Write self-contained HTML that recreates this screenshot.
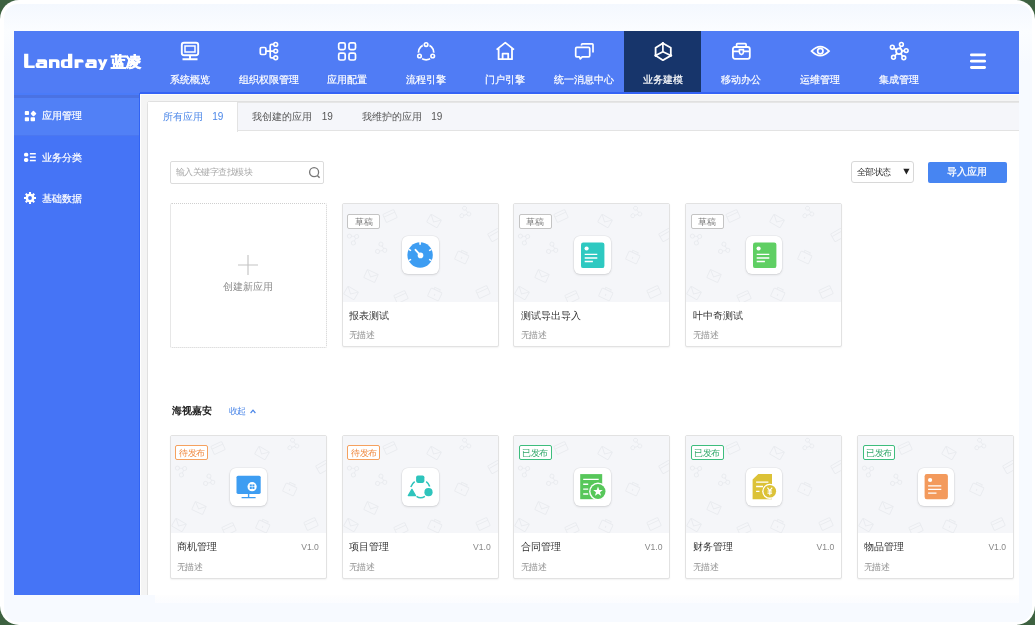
<!DOCTYPE html>
<html><head><meta charset="utf-8">
<style>
*{margin:0;padding:0;box-sizing:border-box;}
html,body{width:1035px;height:625px;overflow:hidden;background:#3d6140;font-family:"Liberation Sans",sans-serif;}
.abs{position:absolute;}
#clip{position:absolute;left:0;top:0;width:1035px;height:625px;clip-path:inset(31px 16px 30px 14px);will-change:transform;}
#frame{position:absolute;left:0;top:0;width:1035px;height:625px;border-radius:19px;background:#fff;overflow:hidden;}
#inner{position:absolute;left:3.5px;top:3.5px;right:3.5px;bottom:3.5px;border-radius:14px;background:linear-gradient(#f4f8fe,#fbfdff 27px,#f7faff 60px);}
.nl{width:80px;text-align:center;color:#fff;font-weight:500;-webkit-text-stroke:0.2px #fff;font-size:10px;line-height:14px;white-space:nowrap;}
.sl{color:#fff;font-weight:500;-webkit-text-stroke:0.2px #fff;font-size:10px;line-height:14px;white-space:nowrap;}
.tab{font-size:10px;font-weight:500;line-height:14px;white-space:nowrap;}
.tabn{font-size:10px;line-height:12px;white-space:nowrap;}

.card{width:157.2px;height:144px;border:1px solid #e2e2e2;border-radius:2px;background:#fff;box-shadow:0 1px 1.5px rgba(0,0,0,0.05);}
.card .img{position:absolute;left:0;top:0;width:155.2px;height:97.5px;background:#f5f6f9;overflow:hidden;}
.card .ib{position:absolute;left:59.8px;top:32px;width:36.5px;height:38px;background:#fff;border-radius:6px;box-shadow:0 0 0 0.6px rgba(0,0,0,0.06),0 1px 2.5px rgba(0,0,0,0.12);}
.card .ib svg{position:absolute;left:0;top:0;}
.card .tt{position:absolute;left:6.5px;top:104.8px;font-size:10px;font-weight:500;color:#333;line-height:14px;white-space:nowrap;}
.card .ds{position:absolute;left:6.5px;top:126.3px;font-size:9px;color:#929292;line-height:12px;white-space:nowrap;transform:scale(0.944);transform-origin:0 0;}
.card .vr{position:absolute;right:7px;top:105.5px;font-size:8.6px;color:#888;line-height:12px;}
.tag{position:absolute;left:4.8px;top:9.8px;height:15px;width:32.8px;border:1.1px solid #aaa;border-radius:2px;background:#fff;text-align:center;}
.tag span{position:absolute;left:50%;top:1px;font-size:10px;line-height:12px;white-space:nowrap;transform:translateX(-50%) scale(0.87);transform-origin:50% 50%;}

.sm{font-size:9px;line-height:12px;white-space:nowrap;transform:scale(0.944);transform-origin:0 0;}
</style></head>
<body>
<div id="frame"><div id="inner"></div>
<div class="abs" style="left:155px;top:595px;width:864px;height:8px;background:linear-gradient(#fefefe,#fbfcff)"></div>
<div id="clip"><div class="abs" style="left:14px;top:31px;width:1005px;height:62px;background:#507cf5"></div>
<div class="abs" style="left:624px;top:31px;width:77.2px;height:62px;background:#17356b"></div>
<svg class="abs" viewBox="0 0 24 24" width="24" height="24" style="left:177.7px;top:39px"><rect x="3.8" y="3.8" width="16.4" height="12.4" rx="2.2" fill="none" stroke="#fff" stroke-width="1.9"/><rect x="7" y="7" width="10" height="6" fill="none" stroke="#fff" stroke-width="1.5"/><path d="M12 16.5V20.2M4.5 20.2H19.5" stroke="#fff" stroke-width="1.9" fill="none"/></svg>
<div class="abs nl" style="left:149.7px;top:72.5px">系统概览</div>
<svg class="abs" viewBox="0 0 24 24" width="24" height="24" style="left:256.5px;top:39px"><rect x="3.3" y="8.5" width="5.6" height="7" rx="1.3" fill="none" stroke="#fff" stroke-width="1.7"/><path d="M8.9 12.1H13.2M16.6 5.4H14.6Q13.2 5.4 13.2 6.8V17.4Q13.2 18.8 14.6 18.8H16.6M13.2 12.1H16.6" fill="none" stroke="#fff" stroke-width="1.7"/><circle cx="18.7" cy="5.4" r="1.9" fill="none" stroke="#fff" stroke-width="1.6"/><circle cx="18.7" cy="12.1" r="1.9" fill="none" stroke="#fff" stroke-width="1.6"/><circle cx="18.7" cy="18.8" r="1.9" fill="none" stroke="#fff" stroke-width="1.6"/></svg>
<div class="abs nl" style="left:228.5px;top:72.5px">组织权限管理</div>
<svg class="abs" viewBox="0 0 24 24" width="24" height="24" style="left:335.3px;top:39px"><rect x="3.7" y="3.9" width="6.5" height="6.8" rx="1.6" fill="none" stroke="#fff" stroke-width="1.7"/><rect x="14" y="3.9" width="6.5" height="6.8" rx="1.6" fill="none" stroke="#fff" stroke-width="1.7"/><rect x="3.7" y="14.2" width="6.5" height="6.8" rx="1.6" fill="none" stroke="#fff" stroke-width="1.7"/><rect x="14" y="14.2" width="6.5" height="6.8" rx="1.6" fill="none" stroke="#fff" stroke-width="1.7"/></svg>
<div class="abs nl" style="left:307.3px;top:72.5px">应用配置</div>
<svg class="abs" viewBox="0 0 24 24" width="24" height="24" style="left:414.1px;top:39px"><circle cx="12.1" cy="13.2" r="7.6" fill="none" stroke="#fff" stroke-width="1.7"/><g fill="#507cf5" stroke="#507cf5" stroke-width="3.4"><circle cx="12.1" cy="5.6" r="1.8"/><circle cx="5.5" cy="17" r="1.8"/><circle cx="18.7" cy="17" r="1.8"/></g><g fill="none" stroke="#fff" stroke-width="1.6"><circle cx="12.1" cy="5.6" r="1.8"/><circle cx="5.5" cy="17" r="1.8"/><circle cx="18.7" cy="17" r="1.8"/></g></svg>
<div class="abs nl" style="left:386.1px;top:72.5px">流程引擎</div>
<svg class="abs" viewBox="0 0 24 24" width="24" height="24" style="left:492.9px;top:39px"><path d="M3.6 10.6L12.3 3.6L21 10.6M5.6 9.4V20.2H19V9.4M9.6 20.2V14.6H15.2V20.2" fill="none" stroke="#fff" stroke-width="1.8" stroke-linejoin="round"/></svg>
<div class="abs nl" style="left:464.9px;top:72.5px">门户引擎</div>
<svg class="abs" viewBox="0 0 24 24" width="24" height="24" style="left:571.7px;top:39px"><path d="M9.5 6.6V5.8Q9.5 4.9 10.4 4.9H20.2Q21 4.9 21 5.8V13.4" fill="none" stroke="#fff" stroke-width="1.7"/><path d="M4.8 8.3H16.6Q17.7 8.3 17.7 9.4V16.7Q17.7 17.8 16.6 17.8H10.2L8.3 19.8L7.4 17.8H4.8Q3.7 17.8 3.7 16.7V9.4Q3.7 8.3 4.8 8.3Z" fill="none" stroke="#fff" stroke-width="1.7" stroke-linejoin="round"/></svg>
<div class="abs nl" style="left:543.7px;top:72.5px">统一消息中心</div>
<svg class="abs" viewBox="0 0 24 24" width="24" height="24" style="left:650.5px;top:39px"><path d="M11.9 4.2L19.8 8.8V16.6L11.9 21.2L4.6 16.6V8.8Z" fill="none" stroke="#fff" stroke-width="1.8" stroke-linejoin="round"/><path d="M11.9 4.2V12.7L4.6 16.6M11.9 12.7L19.8 16.6" fill="none" stroke="#fff" stroke-width="1.7"/><circle cx="4.8" cy="16.6" r="1.4" fill="#fff"/><circle cx="19.8" cy="16.6" r="1.4" fill="#fff"/><circle cx="11.9" cy="4.2" r="1.2" fill="#fff"/></svg>
<div class="abs nl" style="left:622.5px;top:72.5px">业务建模</div>
<svg class="abs" viewBox="0 0 24 24" width="24" height="24" style="left:729.3px;top:39px"><rect x="3.9" y="8" width="16.9" height="11.8" rx="2" fill="none" stroke="#fff" stroke-width="1.8"/><path d="M7.6 8V5.5Q7.6 4.6 8.5 4.6H16.2Q17.1 4.6 17.1 5.5V8M3.9 12.3H10.3M14.5 12.3H20.8" fill="none" stroke="#fff" stroke-width="1.7"/><path d="M10.4 10.6H14.4V13.2Q14.4 14.9 12.4 15.6Q10.4 14.9 10.4 13.2Z" fill="none" stroke="#fff" stroke-width="1.6"/></svg>
<div class="abs nl" style="left:701.3px;top:72.5px">移动办公</div>
<svg class="abs" viewBox="0 0 24 24" width="24" height="24" style="left:808.1px;top:39px"><path d="M3.6 12.1Q12.3 3.2 21 12.1Q12.3 21 3.6 12.1Z" fill="none" stroke="#fff" stroke-width="1.8"/><circle cx="12.3" cy="12.1" r="2.7" fill="none" stroke="#fff" stroke-width="1.7"/></svg>
<div class="abs nl" style="left:780.1px;top:72.5px">运维管理</div>
<svg class="abs" viewBox="0 0 24 24" width="24" height="24" style="left:886.9px;top:39px"><path d="M12 12.3L14.4 5.4M12 12.3L5.3 8.2M12 12.3L19.2 11.6M12 12.3L6.5 18.3M12 12.3L16.8 18.8" stroke="#fff" stroke-width="1.6"/><circle cx="12" cy="12.3" r="2.9" fill="#507cf5" stroke="#fff" stroke-width="1.8"/><g fill="#507cf5" stroke="#fff" stroke-width="1.6"><circle cx="14.4" cy="5.4" r="1.9"/><circle cx="5.3" cy="8.2" r="1.9"/><circle cx="19.2" cy="11.6" r="1.9"/><circle cx="6.5" cy="18.3" r="1.9"/><circle cx="16.8" cy="18.8" r="1.9"/></g></svg>
<div class="abs nl" style="left:858.9px;top:72.5px">集成管理</div>
<svg class="abs" style="left:969.7px;top:53px" width="16" height="16" viewBox="0 0 16 16"><rect x="0" y="0.4" width="16" height="2.9" rx="1.4" fill="#fff"/><rect x="0" y="6.7" width="16" height="2.9" rx="1.4" fill="#fff"/><rect x="0" y="13.1" width="16" height="2.9" rx="1.4" fill="#fff"/></svg>
<svg class="abs" style="left:0;top:0" width="140" height="80" viewBox="0 0 140 80"><g fill="#fff" fill-rule="evenodd"><path d="M24.1 53.7H28.3V65.4H34.7V68.1H25.6Q24.1 68.1 24.1 66.6Z"/><path d="M37.6 59.3H44.6Q47.1 59.3 47.1 61.8V68.1H38.5Q35.5 68.1 35.5 65.2Q35.5 62.3 38.5 62.3H43.6V62H37.6Q37.2 62 37.2 61.6V59.7Q37.2 59.3 37.6 59.3Z M40.6 64.1H43.6V65.8H40.6Q39.4 65.8 39.4 64.95Q39.4 64.1 40.6 64.1Z"/><path d="M49 59.3H56.5Q59.5 59.3 59.5 62.3V68.1H56V63Q56 62 55 62H52.6V68.1H49Z"/><path d="M68 53.8H72.3V68.1H63.9Q60.9 68.1 60.9 65.1V62.3Q60.9 59.3 63.9 59.3H68Z M65.5 61.6H68V66.1H65.5Q64.5 66.1 64.5 65.1V62.6Q64.5 61.6 65.5 61.6Z"/><path d="M74.6 59.3H81.1Q83.6 59.3 83.6 61.8V62.5H78.5V68.1H74.6Z"/><path transform="translate(49.6,0)" d="M37.6 59.3H44.6Q47.1 59.3 47.1 61.8V68.1H38.5Q35.5 68.1 35.5 65.2Q35.5 62.3 38.5 62.3H43.6V62H37.6Q37.2 62 37.2 61.6V59.7Q37.2 59.3 37.6 59.3Z M40.6 64.1H43.6V65.8H40.6Q39.4 65.8 39.4 64.95Q39.4 64.1 40.6 64.1Z"/><path d="M97.7 59.3H101.3L102.7 63.6L104.1 59.3H107.6L102.8 70.1H99.1L100.9 66.1Z"/></g></svg>
<div class="abs" style="left:110.5px;top:52.5px;font-size:14.5px;line-height:18px;font-weight:bold;color:#fff;-webkit-text-stroke:0.7px #fff;white-space:nowrap">蓝凌</div>
<div class="abs" style="left:14px;top:93px;width:126px;height:502px;background:#4574f6"></div>
<div class="abs" style="left:14px;top:93px;width:126px;height:1.5px;background:#4a7bf9"></div>
<div class="abs" style="left:14px;top:94.5px;width:126px;height:3.5px;background:#4a72e3"></div>
<div class="abs" style="left:14px;top:98px;width:126px;height:37px;background:#5180f6"></div>
<div class="abs" style="left:14px;top:134.5px;width:126px;height:1px;background:#4b77f0"></div>
<div class="abs" style="left:139px;top:93px;width:1px;height:502px;background:#3063f4"></div>
<svg class="abs" width="16" height="16" viewBox="0 0 16 16" style="left:23px;top:109px"><rect x="1.8" y="2.1" width="4.2" height="4" rx="0.8" fill="#fff"/><path d="M10.2 1.5L12.6 3.9Q13.4 4.6 12.6 5.4L10.2 7.6Q9.6 8.1 8.9 7.5L6.8 5.4Q6.1 4.6 6.8 3.9L8.9 1.5Q9.6 0.9 10.2 1.5Z" fill="#fff" transform="translate(10.5,4.6) scale(0.85) translate(-9.7,-4.6)"/><rect x="1.8" y="8.3" width="4.2" height="4" rx="0.8" fill="#fff"/><rect x="7.6" y="8.3" width="4.4" height="4" rx="0.8" fill="#fff"/></svg>
<div class="abs sl" style="left:42px;top:109px">应用管理</div>
<svg class="abs" width="16" height="16" viewBox="0 0 16 16" style="left:23px;top:151px"><rect x="1" y="1.8" width="4.3" height="3.8" rx="1.6" fill="#fff"/><rect x="1" y="6.9" width="4.3" height="4" rx="1.6" fill="#fff"/><rect x="6.9" y="2" width="5.9" height="1.5" fill="#fff"/><rect x="6.9" y="5.4" width="5.9" height="1.5" fill="#fff"/><rect x="6.9" y="8.8" width="5.9" height="1.5" fill="#fff"/></svg>
<div class="abs sl" style="left:42px;top:151px">业务分类</div>
<svg class="abs" width="16" height="16" viewBox="0 0 16 16" style="left:22px;top:190px"><path fill-rule="evenodd" fill="#fff" d="M6.95 1.99L9.05 1.99L9.03 3.72L10.30 4.25L11.51 3.01L12.99 4.49L11.75 5.70L12.28 6.97L14.01 6.95L14.01 9.05L12.28 9.03L11.75 10.30L12.99 11.51L11.51 12.99L10.30 11.75L9.03 12.28L9.05 14.01L6.95 14.01L6.97 12.28L5.70 11.75L4.49 12.99L3.01 11.51L4.25 10.30L3.72 9.03L1.99 9.05L1.99 6.95L3.72 6.97L4.25 5.70L3.01 4.49L4.49 3.01L5.70 4.25L6.97 3.72Z M9.9 8A1.9 1.9 0 1 0 6.1 8A1.9 1.9 0 1 0 9.9 8Z"/></svg>
<div class="abs sl" style="left:42px;top:192px">基础数据</div>
<div class="abs" style="left:140px;top:93px;width:879px;height:502px;background:#f4f4f4"></div>
<div class="abs" style="left:140px;top:93px;width:1px;height:502px;background:#fff"></div>
<div class="abs" style="left:140px;top:93.5px;width:879px;height:1.2px;background:#fdfdf8"></div>
<div class="abs" style="left:140px;top:92px;width:879px;height:1.5px;background:#3563f5"></div>
<div class="abs" style="left:147px;top:101px;width:900px;height:510px;background:#fff;border:1px solid #e0e0e0;border-radius:2.5px"></div>
<div class="abs" style="left:237px;top:101.5px;width:800px;height:29.5px;background:#f5f6fa;border-bottom:1px solid #e3e3e3;border-top:1px solid #e6e6e6"></div>
<div class="abs" style="left:148px;top:102px;width:89.5px;height:29.5px;background:#fff;border-right:1px solid #e3e3e3"></div>
<div class="abs tab" style="left:162.5px;top:109.5px;color:#4a86e8">所有应用</div>
<div class="abs tabn" style="left:212.3px;top:111px;color:#4a86e8">19</div>
<div class="abs tab" style="left:252px;top:109.5px;color:#555">我创建的应用</div>
<div class="abs tabn" style="left:321.8px;top:111px;color:#555">19</div>
<div class="abs tab" style="left:361.5px;top:109.5px;color:#555">我维护的应用</div>
<div class="abs tabn" style="left:431.2px;top:111px;color:#555">19</div>
<div class="abs" style="left:169.5px;top:161px;width:154.5px;height:23px;border:1px solid #dcdcdc;border-radius:2px;background:#fff"></div>
<div class="abs sm" style="left:175.5px;top:167px;color:#aaa">输入关键字查找模块</div>
<svg class="abs" style="left:307.5px;top:165.5px" width="14" height="14" viewBox="0 0 14 14"><circle cx="6.1" cy="6.2" r="4.5" fill="none" stroke="#777" stroke-width="1.3"/><path d="M9.4 9.5L11.6 11.7" stroke="#777" stroke-width="1.5"/></svg>
<div class="abs" style="left:850.5px;top:161px;width:63.5px;height:22px;border:1px solid #d8d8d8;border-radius:3px;background:#fff"></div>
<div class="abs sm" style="left:856.5px;top:166.7px;color:#333">全部状态</div>
<svg class="abs" style="left:902.5px;top:168px" width="7" height="7" viewBox="0 0 7 7"><path d="M0.3 0.8H6.5L3.4 6.4Z" fill="#222"/></svg>
<div class="abs" style="left:927.5px;top:161.5px;width:79px;height:21.5px;background:#4785f2;border-radius:2px;color:#fff;font-weight:500;-webkit-text-stroke:0.25px #fff;font-size:10px;line-height:19.5px;text-align:center">导入应用</div>
<div class="abs" style="left:169.5px;top:203px;width:157.5px;height:144.5px;border:1px dotted #cfcfcf;border-radius:2px;background:#fff"></div>
<svg class="abs" style="left:238px;top:254.6px" width="20" height="20" viewBox="0 0 20 20"><path d="M10 0V20M0 10H20" stroke="#c4c4c4" stroke-width="1.15"/></svg>
<div class="abs" style="left:223px;top:280px;font-size:10px;line-height:14px;color:#8a8a8a;white-space:nowrap">创建新应用</div>
<div class="abs card" style="left:341.5px;top:203px"><div class="img"><svg class="abs" style="left:0;top:0" width="157" height="98" viewBox="0 0 157 98"><g fill="none" stroke="#e9ebef" stroke-width="0.9"><g transform="translate(47,12) rotate(-25)"><rect x="-6" y="-4.5" width="12" height="9" rx="1"/><path d="M-6 -1.5H6"/></g><g transform="translate(91,17) rotate(30)"><rect x="-6" y="-4.5" width="12" height="9" rx="1"/><path d="M-6 -4.5L0 1L6 -4.5"/></g><g transform="translate(123,9) rotate(20)"><circle cx="-3" cy="-4" r="2"/><circle cx="3" cy="0" r="2"/><circle cx="-3" cy="4" r="2"/><path d="M-1.5 -3L1.5 -1M1.5 1L-1.5 3"/></g><g transform="translate(11,34) rotate(-30)"><circle cx="-3" cy="-4" r="2"/><circle cx="3" cy="0" r="2"/><circle cx="-3" cy="4" r="2"/><path d="M-1.5 -3L1.5 -1M1.5 1L-1.5 3"/></g><g transform="translate(39,45) rotate(25)"><circle cx="-3" cy="-4" r="2"/><circle cx="3" cy="0" r="2"/><circle cx="-3" cy="4" r="2"/><path d="M-1.5 -3L1.5 -1M1.5 1L-1.5 3"/></g><g transform="translate(119,53) rotate(25)"><rect x="-6" y="-4" width="12" height="9" rx="1"/><path d="M-3 -4V-6H3V-4M0 0V2"/></g><g transform="translate(152,31) rotate(-30)"><rect x="-6" y="-4.5" width="12" height="9" rx="1"/><path d="M-6 -1.5H6"/></g><g transform="translate(28,72) rotate(25)"><rect x="-6" y="-4.5" width="12" height="9" rx="1"/><path d="M-6 -4.5L0 1L6 -4.5"/></g><g transform="translate(8,89) rotate(30)"><rect x="-6" y="-4.5" width="12" height="9" rx="1"/><path d="M-6 -4.5L0 1L6 -4.5"/></g><g transform="translate(58,93) rotate(-25)"><rect x="-6" y="-4.5" width="12" height="9" rx="1"/><path d="M-6 -1.5H6"/></g><g transform="translate(92,90) rotate(25)"><rect x="-6" y="-4" width="12" height="9" rx="1"/><path d="M-3 -4V-6H3V-4M0 0V2"/></g><g transform="translate(140,88) rotate(-25)"><rect x="-6" y="-4.5" width="12" height="9" rx="1"/><path d="M-6 -1.5H6"/></g></g></svg></div><div class="tag" style="border-color:#c4c4c4;color:#7a7a7a"><span>草稿</span></div><div class="ib"><svg width="36.5" height="38" viewBox="0 0 36.5 38"><g transform="translate(18.1,19)"><circle r="12.7" fill="#3d9df2"/><g stroke="#fff" stroke-width="1.6"><path d="M0 -13V-10.2"/><path d="M-11.4 -5.6L-9 -4.4"/><path d="M11.4 -5.6L9 -4.4"/><path d="M-11.4 5.6L-9 4.4"/><path d="M11.4 5.6L9 4.4"/></g><path d="M0.4 0.3L-4.6 -5.2" stroke="#fff" stroke-width="1.9" stroke-linecap="round"/><circle cx="0.4" cy="0.4" r="2.8" fill="#fff"/></g></svg></div><div class="tt">报表测试</div><div class="ds">无描述</div></div>
<div class="abs card" style="left:513.3px;top:203px"><div class="img"><svg class="abs" style="left:0;top:0" width="157" height="98" viewBox="0 0 157 98"><g fill="none" stroke="#e9ebef" stroke-width="0.9"><g transform="translate(47,12) rotate(-25)"><rect x="-6" y="-4.5" width="12" height="9" rx="1"/><path d="M-6 -1.5H6"/></g><g transform="translate(91,17) rotate(30)"><rect x="-6" y="-4.5" width="12" height="9" rx="1"/><path d="M-6 -4.5L0 1L6 -4.5"/></g><g transform="translate(123,9) rotate(20)"><circle cx="-3" cy="-4" r="2"/><circle cx="3" cy="0" r="2"/><circle cx="-3" cy="4" r="2"/><path d="M-1.5 -3L1.5 -1M1.5 1L-1.5 3"/></g><g transform="translate(11,34) rotate(-30)"><circle cx="-3" cy="-4" r="2"/><circle cx="3" cy="0" r="2"/><circle cx="-3" cy="4" r="2"/><path d="M-1.5 -3L1.5 -1M1.5 1L-1.5 3"/></g><g transform="translate(39,45) rotate(25)"><circle cx="-3" cy="-4" r="2"/><circle cx="3" cy="0" r="2"/><circle cx="-3" cy="4" r="2"/><path d="M-1.5 -3L1.5 -1M1.5 1L-1.5 3"/></g><g transform="translate(119,53) rotate(25)"><rect x="-6" y="-4" width="12" height="9" rx="1"/><path d="M-3 -4V-6H3V-4M0 0V2"/></g><g transform="translate(152,31) rotate(-30)"><rect x="-6" y="-4.5" width="12" height="9" rx="1"/><path d="M-6 -1.5H6"/></g><g transform="translate(28,72) rotate(25)"><rect x="-6" y="-4.5" width="12" height="9" rx="1"/><path d="M-6 -4.5L0 1L6 -4.5"/></g><g transform="translate(8,89) rotate(30)"><rect x="-6" y="-4.5" width="12" height="9" rx="1"/><path d="M-6 -4.5L0 1L6 -4.5"/></g><g transform="translate(58,93) rotate(-25)"><rect x="-6" y="-4.5" width="12" height="9" rx="1"/><path d="M-6 -1.5H6"/></g><g transform="translate(92,90) rotate(25)"><rect x="-6" y="-4" width="12" height="9" rx="1"/><path d="M-3 -4V-6H3V-4M0 0V2"/></g><g transform="translate(140,88) rotate(-25)"><rect x="-6" y="-4.5" width="12" height="9" rx="1"/><path d="M-6 -1.5H6"/></g></g></svg></div><div class="tag" style="border-color:#c4c4c4;color:#7a7a7a"><span>草稿</span></div><div class="ib"><svg width="36.5" height="38" viewBox="0 0 36.5 38"><rect x="7" y="6.6" width="23.4" height="25.5" rx="2.2" fill="#2ec9c1"/><circle cx="12.6" cy="12.5" r="2.1" fill="#fff"/><path d="M10.7 18.3H23.3M10.7 22H23.3M10.7 25.5H18.9" stroke="#fff" stroke-width="1.35"/></svg></div><div class="tt">测试导出导入</div><div class="ds">无描述</div></div>
<div class="abs card" style="left:685.1px;top:203px"><div class="img"><svg class="abs" style="left:0;top:0" width="157" height="98" viewBox="0 0 157 98"><g fill="none" stroke="#e9ebef" stroke-width="0.9"><g transform="translate(47,12) rotate(-25)"><rect x="-6" y="-4.5" width="12" height="9" rx="1"/><path d="M-6 -1.5H6"/></g><g transform="translate(91,17) rotate(30)"><rect x="-6" y="-4.5" width="12" height="9" rx="1"/><path d="M-6 -4.5L0 1L6 -4.5"/></g><g transform="translate(123,9) rotate(20)"><circle cx="-3" cy="-4" r="2"/><circle cx="3" cy="0" r="2"/><circle cx="-3" cy="4" r="2"/><path d="M-1.5 -3L1.5 -1M1.5 1L-1.5 3"/></g><g transform="translate(11,34) rotate(-30)"><circle cx="-3" cy="-4" r="2"/><circle cx="3" cy="0" r="2"/><circle cx="-3" cy="4" r="2"/><path d="M-1.5 -3L1.5 -1M1.5 1L-1.5 3"/></g><g transform="translate(39,45) rotate(25)"><circle cx="-3" cy="-4" r="2"/><circle cx="3" cy="0" r="2"/><circle cx="-3" cy="4" r="2"/><path d="M-1.5 -3L1.5 -1M1.5 1L-1.5 3"/></g><g transform="translate(119,53) rotate(25)"><rect x="-6" y="-4" width="12" height="9" rx="1"/><path d="M-3 -4V-6H3V-4M0 0V2"/></g><g transform="translate(152,31) rotate(-30)"><rect x="-6" y="-4.5" width="12" height="9" rx="1"/><path d="M-6 -1.5H6"/></g><g transform="translate(28,72) rotate(25)"><rect x="-6" y="-4.5" width="12" height="9" rx="1"/><path d="M-6 -4.5L0 1L6 -4.5"/></g><g transform="translate(8,89) rotate(30)"><rect x="-6" y="-4.5" width="12" height="9" rx="1"/><path d="M-6 -4.5L0 1L6 -4.5"/></g><g transform="translate(58,93) rotate(-25)"><rect x="-6" y="-4.5" width="12" height="9" rx="1"/><path d="M-6 -1.5H6"/></g><g transform="translate(92,90) rotate(25)"><rect x="-6" y="-4" width="12" height="9" rx="1"/><path d="M-3 -4V-6H3V-4M0 0V2"/></g><g transform="translate(140,88) rotate(-25)"><rect x="-6" y="-4.5" width="12" height="9" rx="1"/><path d="M-6 -1.5H6"/></g></g></svg></div><div class="tag" style="border-color:#c4c4c4;color:#7a7a7a"><span>草稿</span></div><div class="ib"><svg width="36.5" height="38" viewBox="0 0 36.5 38"><rect x="7" y="6.6" width="23.4" height="25.5" rx="2.2" fill="#5fcf63"/><circle cx="12.6" cy="12.5" r="2.1" fill="#fff"/><path d="M10.7 18.3H23.3M10.7 22H23.3M10.7 25.5H18.9" stroke="#fff" stroke-width="1.35"/></svg></div><div class="tt">叶中奇测试</div><div class="ds">无描述</div></div>
<div class="abs" style="left:172px;top:404px;font-size:10px;line-height:14px;color:#222;font-weight:bold;white-space:nowrap">海视嘉安</div>
<div class="abs sm" style="left:228.5px;top:405.5px;color:#4a86e8">收起</div>
<svg class="abs" style="left:249.5px;top:408.8px" width="6" height="5" viewBox="0 0 6 5"><path d="M0.6 4L3 1.2L5.4 4" fill="none" stroke="#4a86e8" stroke-width="1.2"/></svg>
<div class="abs card" style="left:169.7px;top:434.7px"><div class="img"><svg class="abs" style="left:0;top:0" width="157" height="98" viewBox="0 0 157 98"><g fill="none" stroke="#e9ebef" stroke-width="0.9"><g transform="translate(47,12) rotate(-25)"><rect x="-6" y="-4.5" width="12" height="9" rx="1"/><path d="M-6 -1.5H6"/></g><g transform="translate(91,17) rotate(30)"><rect x="-6" y="-4.5" width="12" height="9" rx="1"/><path d="M-6 -4.5L0 1L6 -4.5"/></g><g transform="translate(123,9) rotate(20)"><circle cx="-3" cy="-4" r="2"/><circle cx="3" cy="0" r="2"/><circle cx="-3" cy="4" r="2"/><path d="M-1.5 -3L1.5 -1M1.5 1L-1.5 3"/></g><g transform="translate(11,34) rotate(-30)"><circle cx="-3" cy="-4" r="2"/><circle cx="3" cy="0" r="2"/><circle cx="-3" cy="4" r="2"/><path d="M-1.5 -3L1.5 -1M1.5 1L-1.5 3"/></g><g transform="translate(39,45) rotate(25)"><circle cx="-3" cy="-4" r="2"/><circle cx="3" cy="0" r="2"/><circle cx="-3" cy="4" r="2"/><path d="M-1.5 -3L1.5 -1M1.5 1L-1.5 3"/></g><g transform="translate(119,53) rotate(25)"><rect x="-6" y="-4" width="12" height="9" rx="1"/><path d="M-3 -4V-6H3V-4M0 0V2"/></g><g transform="translate(152,31) rotate(-30)"><rect x="-6" y="-4.5" width="12" height="9" rx="1"/><path d="M-6 -1.5H6"/></g><g transform="translate(28,72) rotate(25)"><rect x="-6" y="-4.5" width="12" height="9" rx="1"/><path d="M-6 -4.5L0 1L6 -4.5"/></g><g transform="translate(8,89) rotate(30)"><rect x="-6" y="-4.5" width="12" height="9" rx="1"/><path d="M-6 -4.5L0 1L6 -4.5"/></g><g transform="translate(58,93) rotate(-25)"><rect x="-6" y="-4.5" width="12" height="9" rx="1"/><path d="M-6 -1.5H6"/></g><g transform="translate(92,90) rotate(25)"><rect x="-6" y="-4" width="12" height="9" rx="1"/><path d="M-3 -4V-6H3V-4M0 0V2"/></g><g transform="translate(140,88) rotate(-25)"><rect x="-6" y="-4.5" width="12" height="9" rx="1"/><path d="M-6 -1.5H6"/></g></g></svg></div><div class="tag" style="border-color:#f5a15f;color:#f08c45"><span>待发布</span></div><div class="ib"><svg width="36.5" height="38" viewBox="0 0 36.5 38"><rect x="6.5" y="7.7" width="24.2" height="18.2" rx="1.6" fill="#3d9df2"/><path d="M18.6 25.9V29M11.6 29.6H25.6" stroke="#3d9df2" stroke-width="1.4"/><circle cx="22.1" cy="18.7" r="4.6" fill="#fff"/><g fill="#3d9df2"><rect x="19.8" y="16.4" width="2" height="2"/><rect x="22.4" y="16.4" width="2" height="2"/><rect x="19.8" y="19" width="2" height="2"/><rect x="22.4" y="19" width="2" height="2"/></g></svg></div><div class="tt">商机管理</div><div class="ds">无描述</div><div class="vr">V1.0</div></div>
<div class="abs card" style="left:341.5px;top:434.7px"><div class="img"><svg class="abs" style="left:0;top:0" width="157" height="98" viewBox="0 0 157 98"><g fill="none" stroke="#e9ebef" stroke-width="0.9"><g transform="translate(47,12) rotate(-25)"><rect x="-6" y="-4.5" width="12" height="9" rx="1"/><path d="M-6 -1.5H6"/></g><g transform="translate(91,17) rotate(30)"><rect x="-6" y="-4.5" width="12" height="9" rx="1"/><path d="M-6 -4.5L0 1L6 -4.5"/></g><g transform="translate(123,9) rotate(20)"><circle cx="-3" cy="-4" r="2"/><circle cx="3" cy="0" r="2"/><circle cx="-3" cy="4" r="2"/><path d="M-1.5 -3L1.5 -1M1.5 1L-1.5 3"/></g><g transform="translate(11,34) rotate(-30)"><circle cx="-3" cy="-4" r="2"/><circle cx="3" cy="0" r="2"/><circle cx="-3" cy="4" r="2"/><path d="M-1.5 -3L1.5 -1M1.5 1L-1.5 3"/></g><g transform="translate(39,45) rotate(25)"><circle cx="-3" cy="-4" r="2"/><circle cx="3" cy="0" r="2"/><circle cx="-3" cy="4" r="2"/><path d="M-1.5 -3L1.5 -1M1.5 1L-1.5 3"/></g><g transform="translate(119,53) rotate(25)"><rect x="-6" y="-4" width="12" height="9" rx="1"/><path d="M-3 -4V-6H3V-4M0 0V2"/></g><g transform="translate(152,31) rotate(-30)"><rect x="-6" y="-4.5" width="12" height="9" rx="1"/><path d="M-6 -1.5H6"/></g><g transform="translate(28,72) rotate(25)"><rect x="-6" y="-4.5" width="12" height="9" rx="1"/><path d="M-6 -4.5L0 1L6 -4.5"/></g><g transform="translate(8,89) rotate(30)"><rect x="-6" y="-4.5" width="12" height="9" rx="1"/><path d="M-6 -4.5L0 1L6 -4.5"/></g><g transform="translate(58,93) rotate(-25)"><rect x="-6" y="-4.5" width="12" height="9" rx="1"/><path d="M-6 -1.5H6"/></g><g transform="translate(92,90) rotate(25)"><rect x="-6" y="-4" width="12" height="9" rx="1"/><path d="M-3 -4V-6H3V-4M0 0V2"/></g><g transform="translate(140,88) rotate(-25)"><rect x="-6" y="-4.5" width="12" height="9" rx="1"/><path d="M-6 -1.5H6"/></g></g></svg></div><div class="tag" style="border-color:#f5a15f;color:#f08c45"><span>待发布</span></div><div class="ib"><svg width="36.5" height="38" viewBox="0 0 36.5 38"><g fill="#2ec4bc"><rect x="14.1" y="7.5" width="8.3" height="7.4" rx="1.8"/><path d="M9.9 21.4L13.5 27.6H6.3Z" stroke="#2ec4bc" stroke-width="1.3" stroke-linejoin="round"/><circle cx="26.5" cy="24.2" r="4.1"/></g><g fill="none" stroke="#2ec4bc" stroke-width="1.5"><path d="M8.8 18.9Q10 15.6 12.7 13.6"/><path d="M24.2 13.6Q26.8 15.5 27.7 18.5"/><path d="M14.5 28.4Q18.7 31.3 22.9 28.4"/></g></svg></div><div class="tt">项目管理</div><div class="ds">无描述</div><div class="vr">V1.0</div></div>
<div class="abs card" style="left:513.3px;top:434.7px"><div class="img"><svg class="abs" style="left:0;top:0" width="157" height="98" viewBox="0 0 157 98"><g fill="none" stroke="#e9ebef" stroke-width="0.9"><g transform="translate(47,12) rotate(-25)"><rect x="-6" y="-4.5" width="12" height="9" rx="1"/><path d="M-6 -1.5H6"/></g><g transform="translate(91,17) rotate(30)"><rect x="-6" y="-4.5" width="12" height="9" rx="1"/><path d="M-6 -4.5L0 1L6 -4.5"/></g><g transform="translate(123,9) rotate(20)"><circle cx="-3" cy="-4" r="2"/><circle cx="3" cy="0" r="2"/><circle cx="-3" cy="4" r="2"/><path d="M-1.5 -3L1.5 -1M1.5 1L-1.5 3"/></g><g transform="translate(11,34) rotate(-30)"><circle cx="-3" cy="-4" r="2"/><circle cx="3" cy="0" r="2"/><circle cx="-3" cy="4" r="2"/><path d="M-1.5 -3L1.5 -1M1.5 1L-1.5 3"/></g><g transform="translate(39,45) rotate(25)"><circle cx="-3" cy="-4" r="2"/><circle cx="3" cy="0" r="2"/><circle cx="-3" cy="4" r="2"/><path d="M-1.5 -3L1.5 -1M1.5 1L-1.5 3"/></g><g transform="translate(119,53) rotate(25)"><rect x="-6" y="-4" width="12" height="9" rx="1"/><path d="M-3 -4V-6H3V-4M0 0V2"/></g><g transform="translate(152,31) rotate(-30)"><rect x="-6" y="-4.5" width="12" height="9" rx="1"/><path d="M-6 -1.5H6"/></g><g transform="translate(28,72) rotate(25)"><rect x="-6" y="-4.5" width="12" height="9" rx="1"/><path d="M-6 -4.5L0 1L6 -4.5"/></g><g transform="translate(8,89) rotate(30)"><rect x="-6" y="-4.5" width="12" height="9" rx="1"/><path d="M-6 -4.5L0 1L6 -4.5"/></g><g transform="translate(58,93) rotate(-25)"><rect x="-6" y="-4.5" width="12" height="9" rx="1"/><path d="M-6 -1.5H6"/></g><g transform="translate(92,90) rotate(25)"><rect x="-6" y="-4" width="12" height="9" rx="1"/><path d="M-3 -4V-6H3V-4M0 0V2"/></g><g transform="translate(140,88) rotate(-25)"><rect x="-6" y="-4.5" width="12" height="9" rx="1"/><path d="M-6 -1.5H6"/></g></g></svg></div><div class="tag" style="border-color:#3dbd7d;color:#34a86c"><span>已发布</span></div><div class="ib"><svg width="36.5" height="38" viewBox="0 0 36.5 38"><rect x="6.2" y="6.1" width="22" height="25.1" fill="#57c75a"/><path d="M9.2 11.4H24.7M9.2 16.3H14.2M9.2 21.1H14.2M9.2 26H14.2" stroke="#fff" stroke-width="1.4"/><circle cx="24" cy="23.5" r="8.9" fill="#fff"/><circle cx="24" cy="23.5" r="7.5" fill="#57c75a"/><path d="M24 18.6L25.3 22L28.8 22.1L26 24.3L27.1 27.8L24 25.7L20.9 27.8L22 24.3L19.2 22.1L22.7 22Z" fill="#fff"/></svg></div><div class="tt">合同管理</div><div class="ds">无描述</div><div class="vr">V1.0</div></div>
<div class="abs card" style="left:685.1px;top:434.7px"><div class="img"><svg class="abs" style="left:0;top:0" width="157" height="98" viewBox="0 0 157 98"><g fill="none" stroke="#e9ebef" stroke-width="0.9"><g transform="translate(47,12) rotate(-25)"><rect x="-6" y="-4.5" width="12" height="9" rx="1"/><path d="M-6 -1.5H6"/></g><g transform="translate(91,17) rotate(30)"><rect x="-6" y="-4.5" width="12" height="9" rx="1"/><path d="M-6 -4.5L0 1L6 -4.5"/></g><g transform="translate(123,9) rotate(20)"><circle cx="-3" cy="-4" r="2"/><circle cx="3" cy="0" r="2"/><circle cx="-3" cy="4" r="2"/><path d="M-1.5 -3L1.5 -1M1.5 1L-1.5 3"/></g><g transform="translate(11,34) rotate(-30)"><circle cx="-3" cy="-4" r="2"/><circle cx="3" cy="0" r="2"/><circle cx="-3" cy="4" r="2"/><path d="M-1.5 -3L1.5 -1M1.5 1L-1.5 3"/></g><g transform="translate(39,45) rotate(25)"><circle cx="-3" cy="-4" r="2"/><circle cx="3" cy="0" r="2"/><circle cx="-3" cy="4" r="2"/><path d="M-1.5 -3L1.5 -1M1.5 1L-1.5 3"/></g><g transform="translate(119,53) rotate(25)"><rect x="-6" y="-4" width="12" height="9" rx="1"/><path d="M-3 -4V-6H3V-4M0 0V2"/></g><g transform="translate(152,31) rotate(-30)"><rect x="-6" y="-4.5" width="12" height="9" rx="1"/><path d="M-6 -1.5H6"/></g><g transform="translate(28,72) rotate(25)"><rect x="-6" y="-4.5" width="12" height="9" rx="1"/><path d="M-6 -4.5L0 1L6 -4.5"/></g><g transform="translate(8,89) rotate(30)"><rect x="-6" y="-4.5" width="12" height="9" rx="1"/><path d="M-6 -4.5L0 1L6 -4.5"/></g><g transform="translate(58,93) rotate(-25)"><rect x="-6" y="-4.5" width="12" height="9" rx="1"/><path d="M-6 -1.5H6"/></g><g transform="translate(92,90) rotate(25)"><rect x="-6" y="-4" width="12" height="9" rx="1"/><path d="M-3 -4V-6H3V-4M0 0V2"/></g><g transform="translate(140,88) rotate(-25)"><rect x="-6" y="-4.5" width="12" height="9" rx="1"/><path d="M-6 -1.5H6"/></g></g></svg></div><div class="tag" style="border-color:#3dbd7d;color:#34a86c"><span>已发布</span></div><div class="ib"><svg width="36.5" height="38" viewBox="0 0 36.5 38"><path d="M12.3 6.1H26V31.2H6.6V11.4Z" fill="#dcc237"/><path d="M10.1 14.1H22.4M10.1 18.5H17M10.1 23.3H13.5" stroke="#fff" stroke-width="1.3"/><circle cx="23.8" cy="23.3" r="7.6" fill="#fff"/><circle cx="23.8" cy="23.3" r="6.3" fill="#dcc237"/><path d="M21.4 19.6L23.8 22.7L26.2 19.6M23.8 22.7V27.3M21.5 23H26.1M21.5 25.1H26.1" fill="none" stroke="#fff" stroke-width="1.1"/></svg></div><div class="tt">财务管理</div><div class="ds">无描述</div><div class="vr">V1.0</div></div>
<div class="abs card" style="left:856.9px;top:434.7px"><div class="img"><svg class="abs" style="left:0;top:0" width="157" height="98" viewBox="0 0 157 98"><g fill="none" stroke="#e9ebef" stroke-width="0.9"><g transform="translate(47,12) rotate(-25)"><rect x="-6" y="-4.5" width="12" height="9" rx="1"/><path d="M-6 -1.5H6"/></g><g transform="translate(91,17) rotate(30)"><rect x="-6" y="-4.5" width="12" height="9" rx="1"/><path d="M-6 -4.5L0 1L6 -4.5"/></g><g transform="translate(123,9) rotate(20)"><circle cx="-3" cy="-4" r="2"/><circle cx="3" cy="0" r="2"/><circle cx="-3" cy="4" r="2"/><path d="M-1.5 -3L1.5 -1M1.5 1L-1.5 3"/></g><g transform="translate(11,34) rotate(-30)"><circle cx="-3" cy="-4" r="2"/><circle cx="3" cy="0" r="2"/><circle cx="-3" cy="4" r="2"/><path d="M-1.5 -3L1.5 -1M1.5 1L-1.5 3"/></g><g transform="translate(39,45) rotate(25)"><circle cx="-3" cy="-4" r="2"/><circle cx="3" cy="0" r="2"/><circle cx="-3" cy="4" r="2"/><path d="M-1.5 -3L1.5 -1M1.5 1L-1.5 3"/></g><g transform="translate(119,53) rotate(25)"><rect x="-6" y="-4" width="12" height="9" rx="1"/><path d="M-3 -4V-6H3V-4M0 0V2"/></g><g transform="translate(152,31) rotate(-30)"><rect x="-6" y="-4.5" width="12" height="9" rx="1"/><path d="M-6 -1.5H6"/></g><g transform="translate(28,72) rotate(25)"><rect x="-6" y="-4.5" width="12" height="9" rx="1"/><path d="M-6 -4.5L0 1L6 -4.5"/></g><g transform="translate(8,89) rotate(30)"><rect x="-6" y="-4.5" width="12" height="9" rx="1"/><path d="M-6 -4.5L0 1L6 -4.5"/></g><g transform="translate(58,93) rotate(-25)"><rect x="-6" y="-4.5" width="12" height="9" rx="1"/><path d="M-6 -1.5H6"/></g><g transform="translate(92,90) rotate(25)"><rect x="-6" y="-4" width="12" height="9" rx="1"/><path d="M-3 -4V-6H3V-4M0 0V2"/></g><g transform="translate(140,88) rotate(-25)"><rect x="-6" y="-4.5" width="12" height="9" rx="1"/><path d="M-6 -1.5H6"/></g></g></svg></div><div class="tag" style="border-color:#3dbd7d;color:#34a86c"><span>已发布</span></div><div class="ib"><svg width="36.5" height="38" viewBox="0 0 36.5 38"><rect x="6.6" y="6.1" width="23.3" height="25.1" rx="2.2" fill="#f39a5c"/><circle cx="12.1" cy="12" r="2.1" fill="#fff"/><path d="M10.1 17.9H23.3M10.1 21.4H23.3M10.1 25.1H18.5" stroke="#fff" stroke-width="1.35"/></svg></div><div class="tt">物品管理</div><div class="ds">无描述</div><div class="vr">V1.0</div></div></div>
</div>
</body></html>
